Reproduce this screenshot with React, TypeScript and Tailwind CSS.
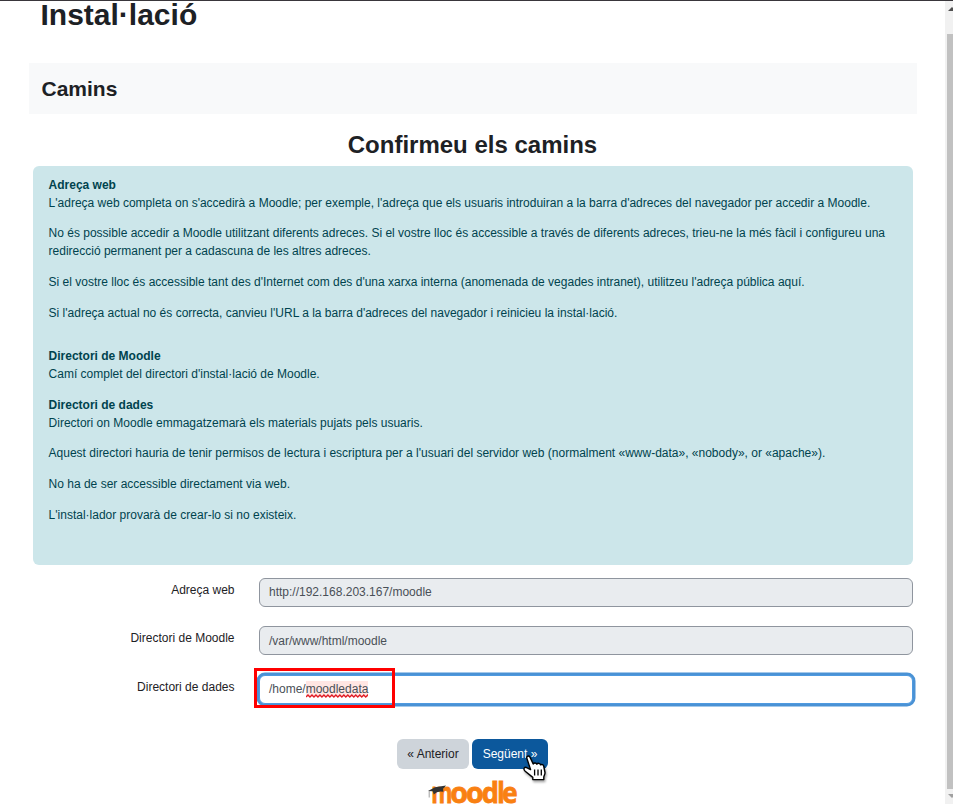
import React from 'react';

type FieldProps = { label: string; children: React.ReactNode };

function Field({ label, children }: FieldProps) {
  return (
    <div className="mb-[19.4px] flex h-[29px] items-start">
      <label className="w-[201.5px] pt-[3px] text-right leading-[18px]">{label}</label>
      <div className="ml-[24.5px] h-[29px] w-[654px]">{children}</div>
    </div>
  );
}

function ReadOnly({ value }: { value: string }) {
  return (
    <div className="flex h-full items-center rounded-[6px] border border-[#8f959e] bg-[#e9ecef] pb-[0.6px] pl-[9px] text-[#495057]">
      {value}
    </div>
  );
}

function MoodleLogo() {
  return (
    <svg className="mt-[9px] h-[26px] w-[92px] shrink-0 overflow-visible" viewBox="0 0 92 26">
      <text
        y="25"
        fill="#f98012"
        stroke="#f98012"
        strokeWidth="0.8"
        fontSize="28.5"
        fontWeight="700"
        fontFamily='"Open Sans", sans-serif'
      >
        <tspan x="4.3" textLength="21.2" lengthAdjust="spacingAndGlyphs">m</tspan>
        <tspan x="23.3" textLength="17.8" lengthAdjust="spacingAndGlyphs">o</tspan>
        <tspan x="39.1" textLength="17.8" lengthAdjust="spacingAndGlyphs">o</tspan>
        <tspan x="54.8" textLength="17.2" lengthAdjust="spacingAndGlyphs">d</tspan>
        <tspan x="70.2" textLength="7.5" lengthAdjust="spacingAndGlyphs">l</tspan>
        <tspan x="75.1" textLength="15.6" lengthAdjust="spacingAndGlyphs">e</tspan>
      </text>
      <path d="M1 13 8 9.2 19 7.6 16.8 10.2 9.5 13.4Z" fill="#333" />
      <path d="M5.5 12.5 Q11 9 16 10 L16.4 13.8 Q10.5 12.4 6.8 16.4Z" fill="#333" />
      <path d="M2.2 13V19.5" stroke="#888" strokeWidth="0.8" />
    </svg>
  );
}

function HandCursor() {
  return (
    <svg
      className="absolute left-[521px] top-[754px] h-[28px] w-[26px] drop-shadow-[1px_2px_1px_rgba(0,0,0,0.35)]"
      viewBox="0 0 26 28"
    >
      <path
        d="M5.9 3.4C5 1.2 7.8 0.2 9 2.2L12.2 9C12.8 7.6 15.3 7.6 15.9 9.2C16.7 7.9 19 8 19.5 9.8C20.8 9 22.6 9.7 22.8 11.5L24 17.5C24.2 19.3 23 20.5 22.8 22V24.6H11.8V22.4L4.2 16.2C1.6 13.9 3.5 11.4 6.2 12.8L9.6 14.6Z"
        fill="#fff"
        stroke="#000"
        strokeWidth="1.4"
        strokeLinejoin="round"
      />
      <path d="M13.6 14.5V20.5M17 14.5V20.5M20.3 14.5V20.5" stroke="#000" strokeWidth="1.3" />
    </svg>
  );
}

function SpellingWave() {
  return (
    <svg className="absolute bottom-[-1px] left-0 h-[4px] w-full" viewBox="0 0 63 4" fill="none">
      <path
        d={'M0 3' + Array.from({ length: 16 }, () => 'l2 -2l2 2').join('')}
        stroke="#e01b24"
        strokeWidth="1.3"
      />
    </svg>
  );
}

function Scrollbar() {
  return (
    <div className="flex h-full w-[8px] shrink-0 flex-col overflow-hidden bg-[#f1f1f1]">
      <div className="h-[33px] shrink-0 pl-[3px] pt-[6px]">
        <svg className="h-[4px] w-[8px]" viewBox="0 0 8 4">
          <path d="M0 4 4 0 8 4Z" fill="#505050" />
        </svg>
      </div>
      <div className="ml-[2px] grow bg-[#c1c1c1]" />
      <div className="h-[15px] shrink-0 pl-[3px] pt-[5px]">
        <svg className="h-[4px] w-[8px]" viewBox="0 0 8 4">
          <path d="M0 0H8L4 4Z" fill="#a0a0a0" />
        </svg>
      </div>
    </div>
  );
}

export default function App() {
  return (
    <div className="relative flex h-[804px] w-[953px] overflow-hidden border-t border-[#39363b] bg-white font-['Liberation_Sans',Arial,sans-serif] text-[12px] leading-[18px] text-[#1d2125]">
      <main className="flex w-[945px] shrink-0 flex-col pl-[29px]">
        <h1 className="ml-[11.5px] h-[58px] shrink-0 text-[30px] font-bold leading-[28px]">Instal·lació</h1>
        <h2 className="mt-[4px] flex h-[51px] w-[888px] shrink-0 items-center bg-[#f8f9fa] pl-[12.5px] text-[21px] font-bold">
          Camins
        </h2>
        <div className="ml-[4px] w-[880px]">
          <h3 className="mt-[16px] h-[36px] pr-[1px] text-center text-[24px] font-bold leading-[30px]">Confirmeu els camins</h3>
          <section className="h-[399px] space-y-[12.8px] rounded-[6px] bg-[#cce6ea] px-[15.6px] pt-[9.6px] text-[#00434e]">
            <p>
              <b>Adreça web</b>
              <br />
              L'adreça web completa on s'accedirà a Moodle; per exemple, l'adreça que els usuaris introduiran a la barra d'adreces del navegador per accedir a Moodle.
            </p>
            <p>
              No és possible accedir a Moodle utilitzant diferents adreces. Si el vostre lloc és accessible a través de diferents adreces, trieu-ne la més fàcil i configureu una
              <br />
              redirecció permanent per a cadascuna de les altres adreces.
            </p>
            <p>Si el vostre lloc és accessible tant des d'Internet com des d'una xarxa interna (anomenada de vegades intranet), utilitzeu l'adreça pública aquí.</p>
            <p>Si l'adreça actual no és correcta, canvieu l'URL a la barra d'adreces del navegador i reinicieu la instal·lació.</p>
            <p className="pt-[12px]">
              <b>Directori de Moodle</b>
              <br />
              Camí complet del directori d'instal·lació de Moodle.
            </p>
            <p>
              <b>Directori de dades</b>
              <br />
              Directori on Moodle emmagatzemarà els materials pujats pels usuaris.
            </p>
            <p>Aquest directori hauria de tenir permisos de lectura i escriptura per a l'usuari del servidor web (normalment «www-data», «nobody», or «apache»).</p>
            <p>No ha de ser accessible directament via web.</p>
            <p>L'instal·lador provarà de crear-lo si no existeix.</p>
          </section>
          <form className="pt-[13px]">
            <Field label="Adreça web">
              <ReadOnly value="http://192.168.203.167/moodle" />
            </Field>
            <Field label="Directori de Moodle">
              <ReadOnly value="/var/www/html/moodle" />
            </Field>
            <Field label="Directori de dades">
              <div className="flex h-full items-center rounded-[6px] border border-[#4f9ae0] bg-white pb-px pl-[9px] text-[#495057] shadow-[0_0_0_2.5px_#4a92d5]">
                /home/
                <span className="relative bg-[#ffe6e3] leading-[16px]">
                  moodledata
                  <SpellingWave />
                </span>
              </div>
            </Field>
          </form>
        </div>
        <div className="mt-[16px] flex w-[888px] justify-center gap-[3px] pr-[1px]">
          <button type="button" className="h-[30px] w-[72px] shrink-0 rounded-[6px] bg-[#ced4da]">« Anterior</button>
          <button type="button" className="h-[30px] w-[76px] shrink-0 rounded-[6px] bg-[#0c589c] text-white">Següent »</button>
        </div>
        <div className="flex w-[888px] justify-center">
          <MoodleLogo />
        </div>
      </main>
      <Scrollbar />
      <div className="absolute left-[254px] top-[667px] h-[40px] w-[141px] border-[3px] border-[#ff0000]" />
      <HandCursor />
    </div>
  );
}
